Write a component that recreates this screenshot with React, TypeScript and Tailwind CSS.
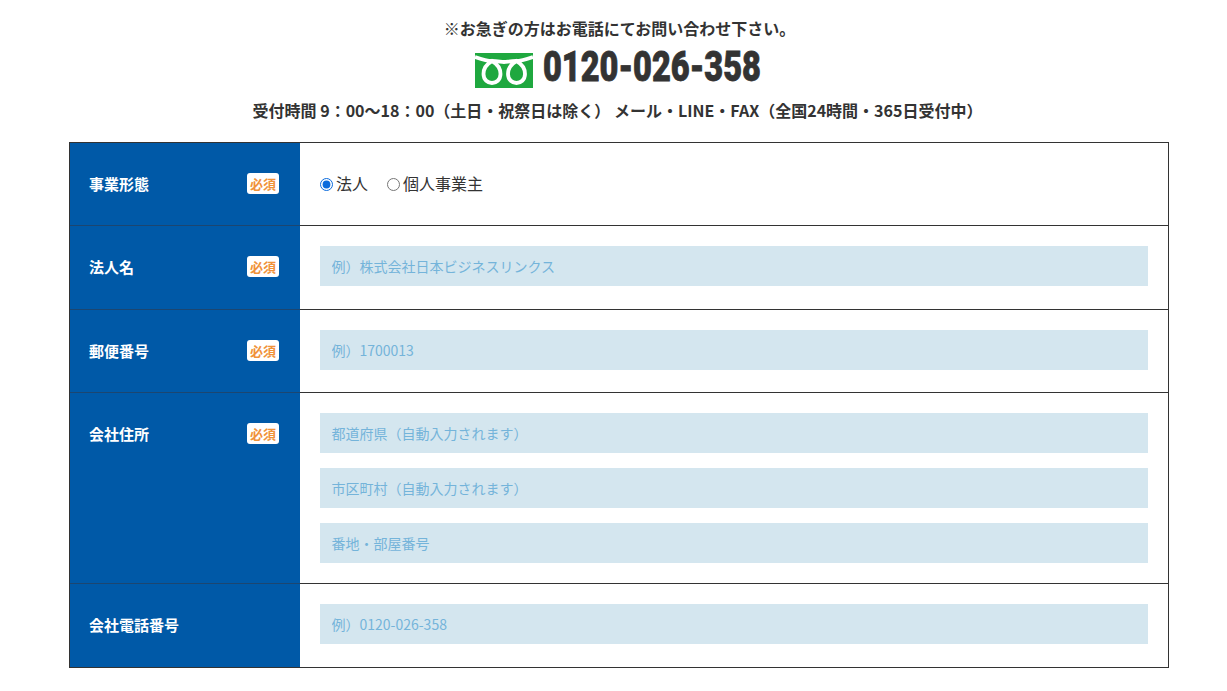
const font = "font-['Noto_Sans_CJK_JP','Noto_Sans',sans-serif]";

function Badge() {
  return (
    <span className="flex h-[21px] w-8 items-center justify-center rounded-[3px] bg-white text-[13px] font-bold leading-none text-[#f0923a]">
      必須
    </span>
  );
}

function Field({ placeholder }: { placeholder: string }) {
  return (
    <input
      type="text"
      placeholder={placeholder}
      className="block h-10 w-full bg-[#d4e6ef] pl-[11.5px] pr-3 text-[14px] outline-none placeholder:text-[#74b4da]"
    />
  );
}

function Row({
  label,
  required = true,
  last = false,
  tight = false,
  children,
}: {
  label: string;
  required?: boolean;
  last?: boolean;
  tight?: boolean;
  children: React.ReactNode;
}) {
  return (
    <div className="flex">
      <div
        className={`flex w-[230px] shrink-0 items-start justify-between bg-[#0059a7] pl-[19px] pr-[21px] pt-[30px] ${
          last ? "" : "border-b border-[#1c4670]"
        }`}
      >
        <span className="text-[15px] font-bold leading-[21px] text-white">{label}</span>
        {required && <Badge />}
      </div>
      <div
        className={`flex-1 pl-5 pr-5 pt-5 ${tight ? "pb-5" : "pb-[22.5px]"} ${
          last ? "" : "border-b border-[#333]"
        }`}
      >
        {children}
      </div>
    </div>
  );
}

export default function App() {
  return (
    <div className={`${font} h-[691px] w-[1227px] overflow-hidden bg-white text-[#333]`}>
      <div className="flex flex-col items-center pt-[17px]">
        <p className="ml-[12px] text-[16px] font-bold leading-[22px]">※お急ぎの方はお電話にてお問い合わせ下さい。</p>
        <div className="ml-[9px] mt-[3px] flex h-[50px] items-center gap-[10px]">
          <svg width="58" height="35" viewBox="0 0 58 35" className="mt-[7px]">
            <rect width="58" height="35" fill="#1fa83f" />
            <g fill="none" stroke="#fff" strokeWidth="3.8">
              <path d="M0 4C6 6 12 8 17 8 23 8 26 9 29 9 32 9 35 8 41 8 46 8 52 6 58 4" />
              <path d="M17 8C24 12 25.500 17 25.500 21 25.500 27 21 30 17 30 13 30 8.500 27 8.500 21 8.500 17 10 12 17 8Z" />
              <path d="M41.500 8C48.500 12 50 17 50 21 50 27 45.500 30 41.500 30 37.500 30 33 27 33 21 33 17 34.500 12 41.500 8Z" />
            </g>
          </svg>
          <div className="w-[218px]">
            <span className="inline-block origin-left scale-x-[0.775] whitespace-nowrap font-['Roboto',sans-serif] text-[42px] font-black leading-none text-[#333] [-webkit-text-stroke:0.8px_#333]">
              0120-026-358
            </span>
          </div>
        </div>
        <p className="ml-[8px] mt-[7px] text-[16px] font-bold leading-[22px]">
          受付時間 9：00〜18：00（土日・祝祭日は除く） メール・LINE・FAX（全国24時間・365日受付中）
        </p>
      </div>

      <div className="ml-[69px] mt-[20.7px] w-[1100px] border border-[#333]">
        <Row label="事業形態">
          <div className="flex h-10 items-center text-[16px]">
            <label className="mr-[19px] flex items-center gap-[3px]">
              <input type="radio" name="kind" defaultChecked className="m-0 mt-[4px] h-[13px] w-[13px] accent-[#0b6bdc]" />
              法人
            </label>
            <label className="flex items-center gap-[3px]">
              <input type="radio" name="kind" className="m-0 mt-[4px] h-[13px] w-[13px]" />
              個人事業主
            </label>
          </div>
        </Row>
        <Row label="法人名">
          <Field placeholder="例）株式会社日本ビジネスリンクス" />
        </Row>
        <Row label="郵便番号">
          <Field placeholder="例）1700013" />
        </Row>
        <Row label="会社住所" tight>
          <div className="flex flex-col gap-[15px]">
            <Field placeholder="都道府県（自動入力されます）" />
            <Field placeholder="市区町村（自動入力されます）" />
            <Field placeholder="番地・部屋番号" />
          </div>
        </Row>
        <Row label="会社電話番号" required={false} last>
          <Field placeholder="例）0120-026-358" />
        </Row>
      </div>
    </div>
  );
}
